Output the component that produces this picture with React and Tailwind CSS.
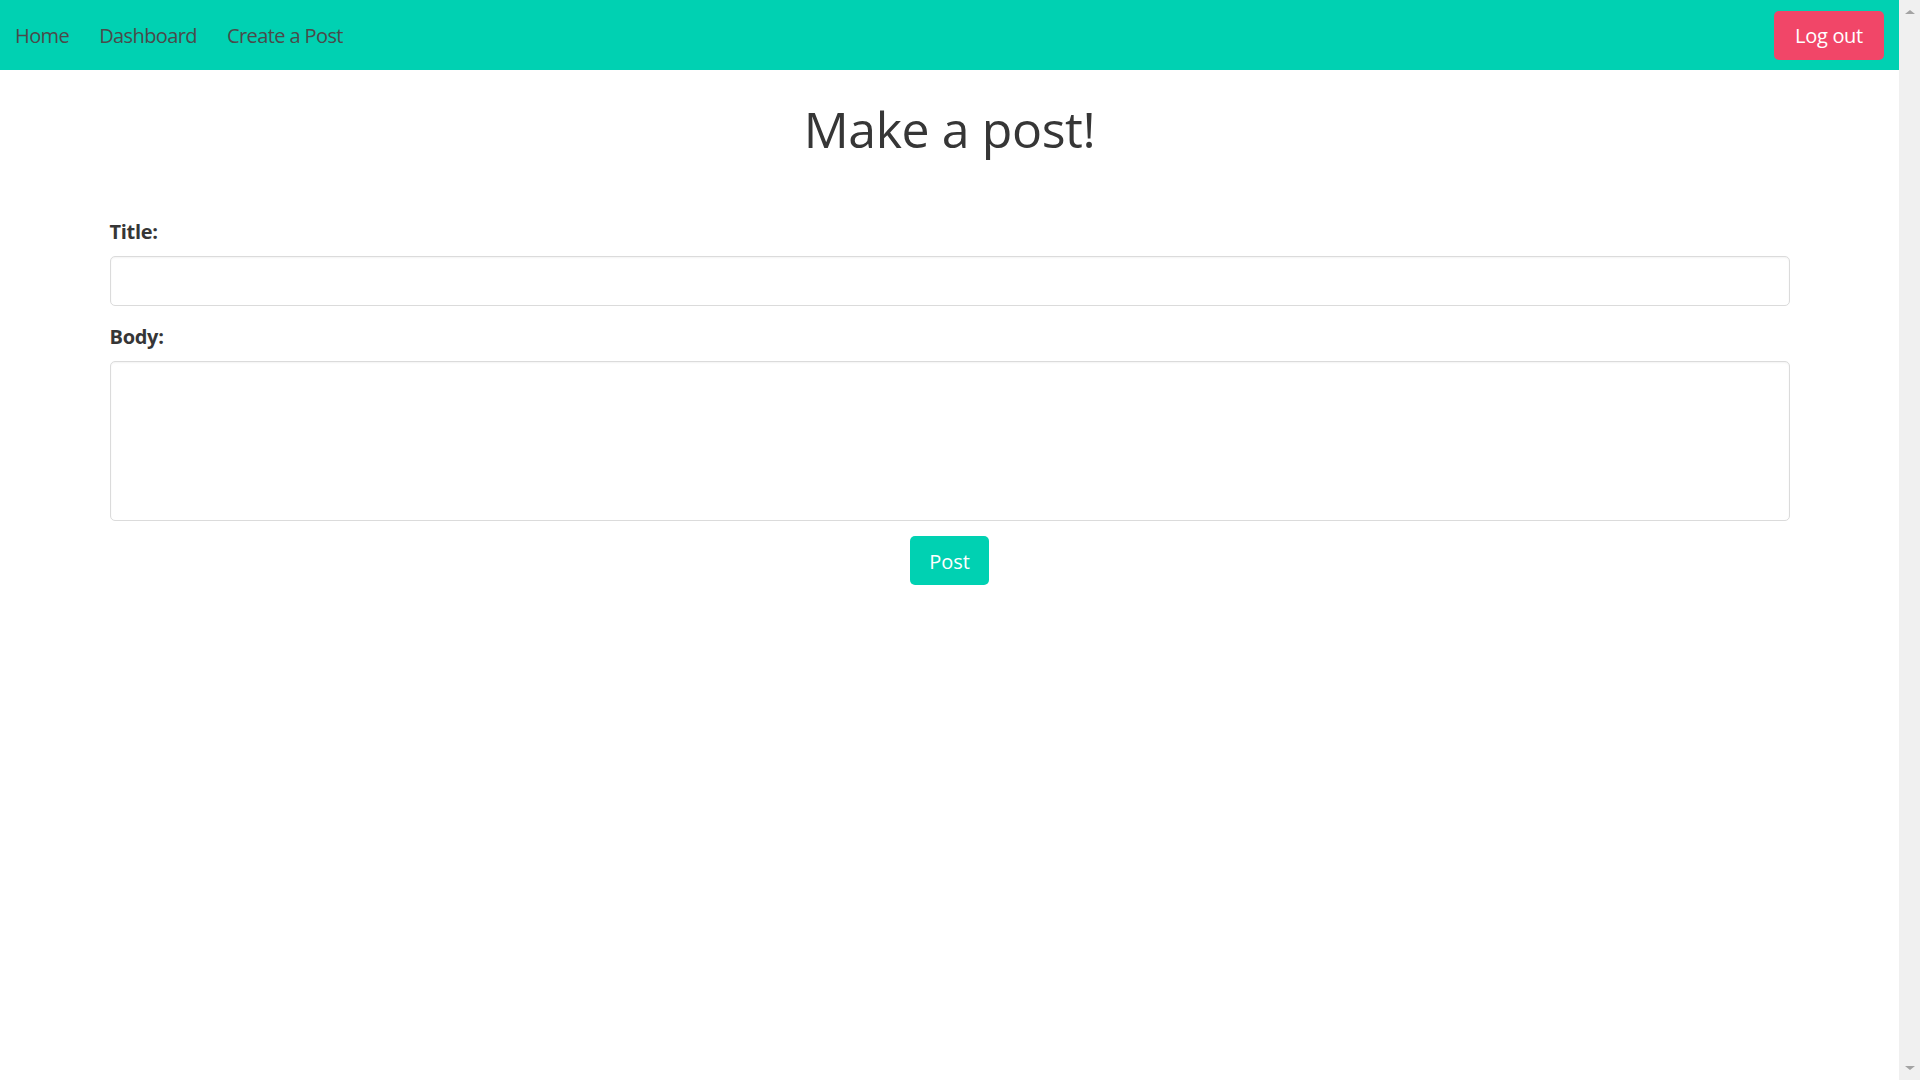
import { useState } from 'react';

const font = { fontFamily: '"Open Sans", "Noto Sans", sans-serif' };

function Navbar() {
  return (
    <nav className="flex h-[70px] items-center justify-between bg-[#00d1b2]">
      <div className="flex items-center pt-[2px]">
        <a href="#" className="px-[15px] text-[20px] tracking-[-0.6px] text-[#4a4a4a]">Home</a>
        <a href="#" className="px-[15px] text-[20px] tracking-[-0.6px] text-[#4a4a4a]">Dashboard</a>
        <a href="#" className="px-[15px] text-[20px] tracking-[-0.6px] text-[#4a4a4a]">Create a Post</a>
      </div>
      <div className="px-[15px]">
        <button
          type="button"
          className="flex h-[49px] w-[110px] items-center justify-center rounded-[5px] bg-[#f14668] pt-[2px] text-[20px] tracking-[-0.3px] text-white"
        >
          Log out
        </button>
      </div>
    </nav>
  );
}

// fake window scrollbar, the reference was shot with one visible
function Scrollbar() {
  return (
    <div className="flex w-[21px] shrink-0 flex-col items-center justify-between bg-[#f0f0f0] py-[10px]">
      <div className="h-0 w-0 border-x-[5px] border-b-[4px] border-x-transparent border-b-[#a3a3a3]" />
      <div className="h-0 w-0 border-x-[5px] border-t-[4px] border-x-transparent border-t-[#a3a3a3]" />
    </div>
  );
}

export default function App() {
  const [title, setTitle] = useState('');
  const [body, setBody] = useState('');

  return (
    <div className="flex h-screen w-full overflow-hidden bg-white" style={font}>
      <div className="flex min-w-0 flex-1 flex-col">
        <Navbar />
        <main className="mx-auto w-[1680px]">
          <h1 className="mt-[31px] text-center text-[50px] leading-[56px] tracking-[-0.4px] text-[#363636]">Make a post!</h1>
          <form className="mt-[60px]" onSubmit={(e) => e.preventDefault()}>
            <label className="block text-[20px] font-bold leading-[30px] tracking-[-0.3px] text-[#363636]">Title:</label>
            <input
              value={title}
              onChange={(e) => setTitle(e.target.value)}
              className="mt-[9px] block h-[50px] w-full rounded-[5px] border border-[#dbdbdb] px-[14px] text-[20px] shadow-[inset_0_1px_2px_rgba(10,10,10,0.05)] outline-none"
            />
            <label className="mt-[16px] block text-[20px] font-bold leading-[30px] tracking-[-0.3px] text-[#363636]">Body:</label>
            <textarea
              value={body}
              onChange={(e) => setBody(e.target.value)}
              className="mt-[9px] block h-[160px] w-full resize-none rounded-[5px] border border-[#dbdbdb] p-[14px] text-[20px] shadow-[inset_0_1px_2px_rgba(10,10,10,0.05)] outline-none"
            />
            <div className="mt-[15px] flex justify-center">
              <button
                type="submit"
                className="flex h-[49px] w-[79px] items-center justify-center rounded-[5px] bg-[#00d1b2] pt-[2px] text-[20px] text-white"
              >
                Post
              </button>
            </div>
          </form>
        </main>
      </div>
      <Scrollbar />
    </div>
  );
}
